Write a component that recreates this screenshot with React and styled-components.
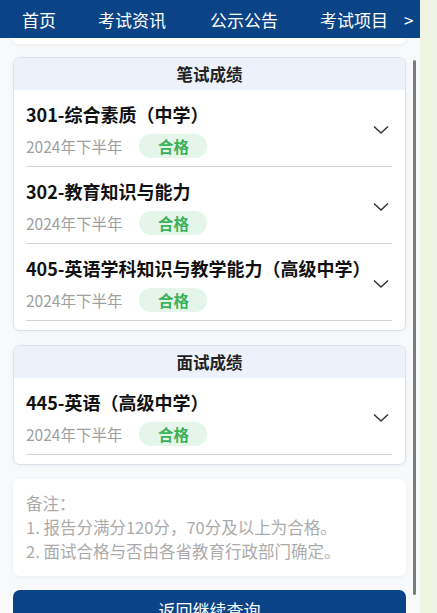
import styled, { createGlobalStyle } from "styled-components";

const GlobalStyle = createGlobalStyle`
  html, body {
    margin: 0;
    padding: 0;
    background: #eff3e2;
    font-family: "Noto Sans CJK SC", "Noto Sans", sans-serif;
  }
  * { box-sizing: border-box; }
`

const Screen = styled.div`
  display: flex;
  width: 437px;
  height: 613px;
  overflow: hidden;
`

const Main = styled.div`
  position: relative;
  width: 420px;
  height: 613px;
  background: #f8f9fb;
  display: flex;
  flex-direction: column;
  overflow: hidden;
`

const Side = styled.div`
  flex: 1;
  background: #eff3e2;
`

const Nav = styled.div`
  display: flex;
  align-items: center;
  height: 38px;
  background: #0b4486;
  color: #fff;
  font-size: 17px;
  padding-left: 22px;
  flex-shrink: 0;
`

const NavItem = styled.span`
  width: ${p => p.w}px;
  flex-shrink: 0;
  white-space: nowrap;
`

const Content = styled.div`
  display: flex;
  flex-direction: column;
  gap: 14px;
  padding: 0 14px 0 13px;
`

const CutCard = styled.div`
  height: 6px;
  background: #fff;
  border-radius: 0 0 7px 7px;
  box-shadow: 0 1px 4px rgba(0, 0, 0, 0.06);
  margin-bottom: -1px;
`

const Card = styled.div`
  background: #fff;
  border: 1px solid #d9e2ea;
  border-radius: 7px;
  box-shadow: 0 1px 5px rgba(0, 0, 0, 0.05);
  overflow: hidden;
  padding-bottom: 9px;
`

const CardHead = styled.div`
  height: 32px;
  background: #edf2fa;
  display: flex;
  align-items: center;
  justify-content: center;
  font-size: 16.5px;
  font-weight: 700;
  color: #222;
`

const Item = styled.div`
  display: flex;
  align-items: center;
  margin: 0 13px 0 12px;
  padding: 12px 3px 8px 0;
  border-bottom: 1px solid #d4d4d4;
`

const ItemBody = styled.div`
  flex: 1;
  display: flex;
  flex-direction: column;
  gap: 7px;
`

const Title = styled.div`
  font-size: 18px;
  font-weight: 700;
  color: #111;
  line-height: 25px;
  white-space: nowrap;
`

const SubRow = styled.div`
  display: flex;
  align-items: center;
  gap: 17px;
`

const Term = styled.span`
  font-size: 15.5px;
  color: #a0a0a0;
  line-height: 24px;
`

const Badge = styled.span`
  display: inline-flex;
  align-items: center;
  justify-content: center;
  width: 68px;
  height: 24px;
  border-radius: 12px;
  background: #e4f6e9;
  color: #3bb15c;
  font-size: 15.5px;
  font-weight: 700;
`

const Chevron = styled.svg`
  width: 16px;
  height: 10px;
  flex-shrink: 0;
`

const Notes = styled.div`
  background: #fff;
  border-radius: 7px;
  box-shadow: 0 1px 5px rgba(0, 0, 0, 0.05);
  padding: 12px 13px 13px;
  font-size: 16.5px;
  line-height: 24px;
  color: #ababab;
`

const ReturnButton = styled.div`
  height: 40px;
  background: #0b4486;
  border-radius: 7px;
  color: #fff;
  font-size: 17px;
  display: flex;
  justify-content: center;
  padding-top: 7px;
`

const Scrollbar = styled.div`
  position: absolute;
  left: 413px;
  top: 60px;
  width: 3px;
  height: 535px;
  border-radius: 2px;
  background: #7b7b7b;
`

const written = [
  "301-综合素质（中学）",
  "302-教育知识与能力",
  "405-英语学科知识与教学能力（高级中学）",
]

function ScoreItem({ title }) {
  return (
    <Item>
      <ItemBody>
        <Title>{title}</Title>
        <SubRow>
          <Term>2024年下半年</Term>
          <Badge>合格</Badge>
        </SubRow>
      </ItemBody>
      <Chevron viewBox="0 0 16 10">
        <path d="M1 1.5 L8 8 L15 1.5" fill="none" stroke="#333" strokeWidth="1.5" />
      </Chevron>
    </Item>
  )
}

function App() {
  return (
    <Screen>
      <GlobalStyle />
      <Main>
        <Nav>
          <NavItem w={76}>首页</NavItem>
          <NavItem w={112}>考试资讯</NavItem>
          <NavItem w={110}>公示公告</NavItem>
          <NavItem w={84}>考试项目</NavItem>
          <NavItem w={10}>&gt;</NavItem>
        </Nav>
        <Content>
          <CutCard />
          <Card>
            <CardHead>笔试成绩</CardHead>
            {written.map(t => <ScoreItem key={t} title={t} />)}
          </Card>
          <Card>
            <CardHead>面试成绩</CardHead>
            <ScoreItem title="445-英语（高级中学）" />
          </Card>
          <Notes>
            <div>备注：</div>
            <div>1. 报告分满分120分，70分及以上为合格。</div>
            <div>2. 面试合格与否由各省教育行政部门确定。</div>
          </Notes>
          <ReturnButton>返回继续查询</ReturnButton>
        </Content>
        <Scrollbar />
      </Main>
      <Side />
    </Screen>
  )
}

export default App
